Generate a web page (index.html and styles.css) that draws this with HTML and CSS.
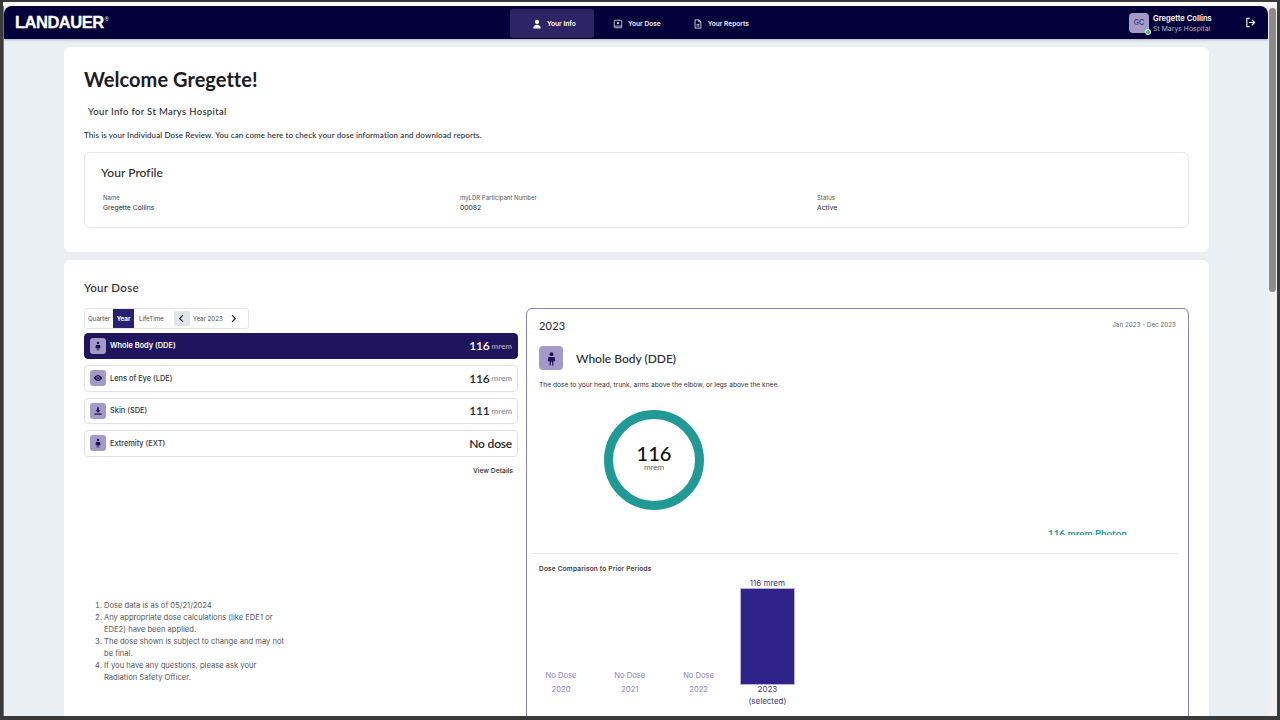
FILE: index.html
```html
<!DOCTYPE html>
<html lang="en">
<head>
<meta charset="utf-8">
<title>Landauer - Your Info</title>
<link rel="stylesheet" href="styles.css">
</head>
<body>
<div class="frame">
  <div class="viewport">
    <div class="page">
      <header class="nav">
        <div class="logo">LANDAUER<sup class="reg">®</sup></div>
        <nav class="tabs">
          <a class="tab active">
            <svg class="tab-icon" viewBox="0 0 24 24"><circle cx="12" cy="7" r="5" fill="#fff"/><path d="M3 23c0-6 4-9 9-9s9 3 9 9z" fill="#fff"/></svg>
            Your Info</a>
          <a class="tab">
            <svg class="tab-icon" viewBox="0 0 24 24" fill="none" stroke="#d9d9e6" stroke-width="2"><rect x="3" y="3" width="18" height="18" rx="2"/><path d="M3 17h18"/><circle cx="12" cy="10" r="2.6" fill="#d9d9e6" stroke="none"/></svg>
            Your Dose</a>
          <a class="tab">
            <svg class="tab-icon" viewBox="0 0 24 24" fill="none" stroke="#e6e6ef" stroke-width="2"><path d="M5 2h9l5 5v15H5z"/><path d="M14 2v5h5M8.500 13h7M8.500 17h7"/></svg>
            Your Reports</a>
        </nav>
        <div class="user">
          <div class="avatar">GC<span class="online"></span></div>
          <div class="user-text">
            <div class="user-name">Gregette Collins</div>
            <div class="user-org">St Marys Hospital</div>
          </div>
          <svg class="logout" viewBox="0 0 24 24" fill="none" stroke="#fff" stroke-width="2.4"><path d="M10 3H4v18h6"/><path d="M9 12h11M15 6l6 6-6 6"/></svg>
        </div>
      </header>

      <main class="content">
        <section class="card welcome">
          <h1 class="title">Welcome Gregette!</h1>
          <h2 class="subtitle">Your Info for St Marys Hospital</h2>
          <p class="intro">This is your Individual Dose Review. You can come here to check your dose information and download reports.</p>
          <div class="profile">
            <h3 class="profile-title">Your Profile</h3>
            <div class="profile-grid">
              <div><div class="field-label">Name</div><div class="field-value">Gregette Collins</div></div>
              <div><div class="field-label">myLDR Participant Number</div><div class="field-value">00082</div></div>
              <div><div class="field-label">Status</div><div class="field-value">Active</div></div>
            </div>
          </div>
        </section>

        <section class="card dose">
          <h2 class="dose-title">Your Dose</h2>
          <div class="dose-grid">
            <div class="dose-left">
              <div class="period">
                <span class="period-item">Quarter</span>
                <span class="period-item selected">Year</span>
                <span class="period-item">LifeTime</span>
                <span class="arrow arrow-active"><svg viewBox="0 0 12 12" class="chev"><path d="M8 1.500L3.500 6 8 10.500"/></svg></span>
                <span class="period-year">Year 2023</span>
                <span class="arrow"><svg viewBox="0 0 12 12" class="chev"><path d="M4 1.500L8.500 6 4 10.500"/></svg></span>
              </div>
              <div class="rows">
                <div class="row row-on">
                  <span class="badge"><svg viewBox="0 0 24 24" class="person"><circle cx="12" cy="5" r="3"/><path d="M7 9.500h10l1 7h-3v6.500h-2v-6h-2v6H9v-6.500H6z"/></svg></span>
                  <span class="row-name">Whole Body (DDE)</span>
                  <span class="row-val">116</span><span class="row-unit">mrem</span>
                </div>
                <div class="row">
                  <span class="badge"><svg viewBox="0 0 24 24" class="person"><path d="M12 5C6 5 2 12 2 12s4 7 10 7 10-7 10-7-4-7-10-7zm0 11a4 4 0 110-8 4 4 0 010 8z"/><circle cx="12" cy="12" r="2.200"/></svg></span>
                  <span class="row-name">Lens of Eye (LDE)</span>
                  <span class="row-val">116</span><span class="row-unit">mrem</span>
                </div>
                <div class="row">
                  <span class="badge"><svg viewBox="0 0 24 24" class="person"><path d="M10 3h4v7h4l-6 6-6-6h4zM3 18h18v3H3z"/></svg></span>
                  <span class="row-name">Skin (SDE)</span>
                  <span class="row-val">111</span><span class="row-unit">mrem</span>
                </div>
                <div class="row">
                  <span class="badge"><svg viewBox="0 0 24 24" class="person"><circle cx="12" cy="5" r="3"/><path d="M7 9.500h10l1 7h-3v6.500h-2v-6h-2v6H9v-6.500H6z"/></svg></span>
                  <span class="row-name">Extremity (EXT)</span>
                  <span class="row-val">No dose</span>
                </div>
              </div>
              <div class="details">View Details</div>
              <ol class="notes">
                <li>Dose data is as of 05/21/2024</li>
                <li>Any appropriate dose calculations (like EDE1 or EDE2) have been applied.</li>
                <li>The dose shown is subject to change and may not be final.</li>
                <li>If you have any questions, please ask your Radiation Safety Officer.</li>
              </ol>
            </div>

            <div class="panel">
              <div class="panel-head">
                <span class="panel-year">2023</span>
                <span class="panel-range">Jan 2023 - Dec 2023</span>
              </div>
              <div class="panel-type">
                <span class="badge badge-big"><svg viewBox="0 0 24 24" class="person"><circle cx="12" cy="5" r="3"/><path d="M7 9.500h10l1 7h-3v6.500h-2v-6h-2v6H9v-6.500H6z"/></svg></span>
                <span class="panel-name">Whole Body (DDE)</span>
              </div>
              <p class="panel-desc">The dose to your head, trunk, arms above the elbow, or legs above the knee.</p>
              <div class="donut-area">
                <div class="donut">
                  <div class="donut-val">116</div>
                  <div class="donut-unit">mrem</div>
                </div>
                <div class="photon">116 mrem Photon</div>
              </div>
              <div class="compare">
                <div class="compare-title">Dose Comparison to Prior Periods</div>
                <div class="bars">
                  <div class="bar-col"><div class="bar-top">No Dose</div><div class="bar-year">2020</div></div>
                  <div class="bar-col"><div class="bar-top">No Dose</div><div class="bar-year">2021</div></div>
                  <div class="bar-col"><div class="bar-top">No Dose</div><div class="bar-year">2022</div></div>
                  <div class="bar-col bar-now"><div class="bar-top">116 mrem</div><div class="bar"></div><div class="bar-year">2023<br>(selected)</div></div>
                </div>
              </div>
            </div>
          </div>
        </section>
      </main>
    </div>
    <div class="scrollbar"><div class="thumb"></div></div>
  </div>
</div>
</body>
</html>
```

FILE: styles.css
```css
* { box-sizing: border-box; }
html, body { margin: 0; height: 100%; overflow: hidden; }
body { font-family: "Lato", "Liberation Sans", sans-serif; color: #1f1f24; }

.frame {
  width: 1280px; height: 720px; background: #fff;
  border-style: solid; border-color: #3a3a3a; border-width: 2px 3px 4px 3px;
  padding-top: 4px; overflow: hidden;
}
.viewport { display: flex; height: 100%; overflow: hidden; background: #e9eff3; border-left: 1px solid #777; }
.page { flex: 1; min-width: 0; overflow: hidden; }
.scrollbar { width: 9px; background: #f1f1f1; flex: none; padding: 2px 1px 0 1px; }
.thumb { height: 284px; width: 6.500px; background: #8b8b8b; border-radius: 4px; }

.nav {
  height: 33px; background: #03003a; border-radius: 8px 8px 0 0;
  display: flex; align-items: center; position: relative; padding-left: 11px;
  box-shadow: 0 1px 3px rgba(0,0,0,.25);
}
.logo { font-family: "Liberation Sans", sans-serif; font-weight: 700; font-size: 16.500px; color: #fff; letter-spacing: -.5px; width: 495px; -webkit-text-stroke: .3px #fff; white-space: nowrap; }
.reg { font-size: 6px; vertical-align: top; line-height: 12px; color: #ccc; margin-left: 1px; letter-spacing: 0; -webkit-text-stroke: 0; }
.tabs { display: flex; height: 100%; padding-top: 3px; padding-bottom: 1px; }
.tab {
  display: flex; align-items: center; gap: 5px; color: #eeeef6; white-space: nowrap;
  font-family: "Inter", sans-serif; font-size: 6.600px; font-weight: 600; padding: 0 13px 0 19px;
}
.tab.active { background: #2d2466; border-radius: 3px; color: #fff; width: 84px; padding: 0 0 0 22px; }
.tab-icon { width: 10px; height: 10px; flex: none; }
.user { margin-left: auto; display: flex; align-items: center; margin-right: 12px; }
.avatar {
  width: 20px; height: 20px; background: #a49ac9; border-radius: 4px; position: relative;
  display: flex; align-items: center; justify-content: center; font-family: "Inter", sans-serif;
  font-size: 7px; color: #35305e; font-weight: 500;
}
.online { position: absolute; right: -2px; bottom: -2px; width: 6px; height: 6px; background: #1fbf6b; border: 1px solid #fff; border-radius: 50%; }
.user-text { margin-left: 4px; width: 92px; padding-top: 2px; }
.user-name { color: #fff; font-family: "Inter", sans-serif; font-size: 7.600px; font-weight: 600; line-height: 11px; }
.user-org { color: #b9b9cc; font-family: "Inter", sans-serif; font-size: 6.700px; line-height: 10px; letter-spacing: .1px; }
.logout { width: 11px; height: 11px; }

.content { padding: 8px 59px 0 60px; display: flex; flex-direction: column; gap: 8px; }
.card { background: #fff; border-radius: 6px; padding: 0 20px; }
.welcome { height: 205px; padding-top: 19px; }
.title { margin: 0; font-size: 20px; font-weight: 700; line-height: 26px; color: #1a1a1f; letter-spacing: .04px; }
.subtitle { margin: 13px 0 0 4px; font-size: 9.500px; font-weight: 500; line-height: 14px; color: #2a2a30; letter-spacing: .33px; }
.intro { margin: 10px 0 0; font-size: 8px; line-height: 12px; color: #2a2a30; letter-spacing: .11px; font-weight: 500; }
.profile { margin-top: 11px; height: 76px; border: 1px solid #e6e8ec; border-radius: 6px; padding: 12px 16px 0; }
.profile-title { margin: 0; font-size: 12px; font-weight: 500; line-height: 16px; color: #2a2a30; letter-spacing: .05px; }
.profile-grid { display: grid; grid-template-columns: 357px 357px 1fr; margin: 13px 0 0 2px; }
.field-label { font-size: 6px; line-height: 8px; color: #55555c; font-family: "Inter", sans-serif; }
.field-value { font-size: 6.800px; line-height: 11px; color: #26262c; font-family: "Inter", sans-serif; }

.dose { height: 500px; padding-top: 20px; }
.dose-title { margin: 0 0 13px; font-size: 11.500px; font-weight: 500; line-height: 15px; color: #2a2a30; letter-spacing: .3px; }
.dose-grid { display: grid; grid-template-columns: 434px 663px; gap: 8px; }
.period {
  display: flex; width: fit-content; align-items: stretch; height: 21px; border: 1px solid #e2e5ea; border-radius: 3px;
  font-size: 6.200px; color: #4a4a55; font-family: "Inter", sans-serif;
}
.period-item { display: flex; align-items: center; padding: 0 3px; }
.period-item:nth-child(3) { padding: 0 10px 0 5px; }
.selected { background: #2b1f72; color: #fff; font-weight: 700; padding: 0 3.500px; }
.arrow { width: 16px; display: flex; align-items: center; justify-content: center; }
.arrow-active { background: #dfe5ec; margin: 2px 0; border-radius: 2px; }
.period-year { display: flex; align-items: center; padding: 0 3px; }
.arrow:last-child { margin-right: 6px; }
.chev { width: 9px; height: 9px; fill: none; stroke: #222; stroke-width: 1.600; }
.rows { margin-top: 3.500px; display: flex; flex-direction: column; gap: 6px; }
.row {
  height: 26.500px; display: flex; align-items: center; border: 1px solid #dfe2e7; border-radius: 4px;
  padding: 0 5px; color: #33333b;
}
.row-on { background: #21145e; border-color: #21145e; color: #fff; }
.badge { width: 16px; height: 16px; border-radius: 3px; background: #a49ac9; display: flex; align-items: center; justify-content: center; flex: none; }
.person { width: 10px; height: 10px; fill: #1c1350; }
.row-name { margin-left: 4px; font-size: 7.400px; font-weight: 500; font-family: "Inter", sans-serif; margin-right: auto; }
.row-on .row-name { font-weight: 600; }
.row-val { font-size: 12px; font-weight: 600; letter-spacing: -.2px; color: #26262c; }
.row-on .row-val { color: #fff; }
.row-unit { font-size: 8px; margin-left: 2px; color: #9a9aa4; font-weight: 700; }
.details { text-align: right; margin: 9px 5px 0 0; font-size: 6.800px; line-height: 10px; font-family: "Inter", sans-serif; color: #2a2a30; font-weight: 500; }
.notes {
  margin: 124.500px 0 0; padding: 0 0 0 20px; width: 204px; font-family: "Inter", sans-serif; font-size: 7.600px; line-height: 12px; color: #55555c;
}
.panel {
  height: 500px; margin-top: 0; border: 1px solid #8a81b8; border-radius: 6px; padding: 10px 12px 0 12px; overflow: hidden;
}
.panel-head { display: flex; justify-content: space-between; }
.panel-year { font-size: 11px; line-height: 14px; color: #222; letter-spacing: .2px; }
.panel-range { font-size: 6.300px; line-height: 10px; color: #666; font-family: "Inter", sans-serif; margin-top: 1px; }
.panel-type { display: flex; align-items: center; margin-top: 13px; }
.badge-big { width: 24px; height: 24px; border-radius: 4px; }
.badge-big .person { width: 15px; height: 15px; }
.panel-name { margin-left: 13px; font-size: 12px; font-weight: 500; color: #2a2a30; }
.panel-desc { margin: 10px 0 0; font-size: 6.650px; line-height: 10px; color: #33333b; font-family: "Inter", sans-serif; }
.donut-area { position: relative; height: 145px; overflow: hidden; margin: 0 -6px; padding: 20px 0 0 71px; }
.donut {
  width: 100px; height: 100px; border-radius: 50%; border: 9.500px solid #1f9a96;
  display: flex; flex-direction: column; align-items: center; justify-content: center;
}
.donut-val { font-size: 20px; line-height: 20px; font-weight: 500; color: #111; margin-top: -6px; }
.donut-unit { font-size: 8px; line-height: 9px; color: #666; }
.photon { position: absolute; left: 515px; bottom: -5px; font-size: 9.800px; font-weight: 700; color: #1f9a96; line-height: 14px; white-space: nowrap; }
.compare { margin: 18px -2px 0 -7px; padding: 10px 2px 0 7px; border-top: 1px solid #e9ebee; }
.compare-title { font-size: 6.500px; line-height: 10px; font-family: "Inter", sans-serif; font-weight: 600; color: #3a3a42; letter-spacing: .2px; }
.bars { display: flex; height: 133px; gap: 13.800px; margin-left: -5.500px; }
.bar-col { width: 55px; display: flex; flex-direction: column; justify-content: flex-end; align-items: center; text-align: center; font-family: "Inter", sans-serif; font-size: 7.600px; line-height: 11px; color: #8a7fc8; padding-bottom: 12px; }
.bar-top { margin-bottom: 3px; white-space: nowrap; }
.bar-now { color: #403a70; padding-bottom: 0; font-size: 8px; }
.bar-now .bar-top { margin-bottom: -1px; }
.bar { width: 55px; height: 97px; background: #2f2389; flex: none; border: 1px solid #b8b1dc; }
.bar-now .bar-year { line-height: 12px; margin-top: -2px; }
```
